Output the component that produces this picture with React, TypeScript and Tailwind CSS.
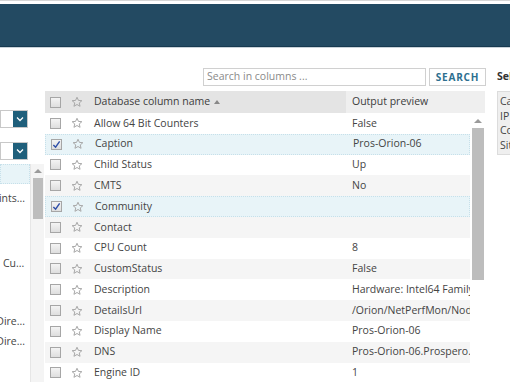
import React from 'react';

const rows: { name: string; value: string; checked?: boolean }[] = [
  { name: 'Allow 64 Bit Counters', value: 'False' },
  { name: 'Caption', value: 'Pros-Orion-06', checked: true },
  { name: 'Child Status', value: 'Up' },
  { name: 'CMTS', value: 'No' },
  { name: 'Community', value: '', checked: true },
  { name: 'Contact', value: '' },
  { name: 'CPU Count', value: '8' },
  { name: 'CustomStatus', value: 'False' },
  { name: 'Description', value: 'Hardware: Intel64 Family 6 Model 45' },
  { name: 'DetailsUrl', value: '/Orion/NetPerfMon/NodeDetails.aspx' },
  { name: 'Display Name', value: 'Pros-Orion-06' },
  { name: 'DNS', value: 'Pros-Orion-06.Prospero.local' },
  { name: 'Engine ID', value: '1' },
];

const Star = () => (
  <svg width="12" height="12" viewBox="0 0 24 24" fill="none" stroke="#a8a8a8" strokeWidth="2" strokeLinejoin="round">
    <polygon points="12,2.5 14.9,8.8 21.7,9.4 16.5,13.9 18.1,20.6 12,17 5.9,20.6 7.5,13.9 2.3,9.4 9.1,8.8" />
  </svg>
);

const Check = ({ checked }: { checked?: boolean }) => (
  <div className="w-[11px] h-[11px] border border-[#a6a6a6] bg-gradient-to-b from-[#f4f4f4] to-[#dedede] flex items-center justify-center">
    {checked && (
      <svg width="9" height="9" viewBox="0 0 10 10" fill="none" stroke="#2f4fa8" strokeWidth="1.6">
        <path d="M1.5 5.5 L4 8 L8.5 1.5" />
      </svg>
    )}
  </div>
);

const Select = () => (
  <div className="flex h-[18px] w-[28px] border border-[#c8c8c8] bg-white">
    <div className="flex-1" />
    <div className="w-[14px] bg-[#1f5f7b] flex items-center justify-center">
      <svg width="8" height="6" viewBox="0 0 8 6" fill="none" stroke="white" strokeWidth="1.3">
        <path d="M1 1.5 L4 4.5 L7 1.5" />
      </svg>
    </div>
  </div>
);

export default function App() {
  return (
    <div className="w-[510px] h-[382px] overflow-hidden bg-white text-[#444] text-[10.5px]" style={{ fontFamily: '"Open Sans", "Liberation Sans", sans-serif' }}>
      {/* Top chrome */}
      <div className="h-[1px] bg-[#d6d6d6]" />
      <div className="h-[3px] bg-white" />
      <div className="h-[43px] bg-[#234a62] border-b border-[#173a50]" />
      <div className="h-[1px] bg-[#c9d2d9]" />

      <div className="flex">
        {/* Left panel */}
        <div className="w-[45px] shrink-0 flex flex-col pt-[62px]">
          <Select />
          <div className="h-[14px]" />
          <Select />
          <div className="flex mt-[4px] h-[220px]">
            <div className="w-[31px] border-r border-[#e6e6e6] flex flex-col">
              <div className="h-[20px] bg-[#e8f4f8] border border-dotted border-[#c6e0ea]" />
              <div className="h-[24px] mt-[3px] flex items-center justify-end pr-[5px] overflow-hidden whitespace-nowrap">ints...</div>
              <div className="h-[41px]" />
              <div className="h-[24px] flex items-center pl-[3px] whitespace-nowrap">Cu...</div>
              <div className="h-[36px]" />
              <div className="h-[20px] flex items-center justify-end pr-[5px] whitespace-nowrap">Dire...</div>
              <div className="h-[20px] flex items-center justify-end pr-[5px] whitespace-nowrap">Dire...</div>
            </div>
            <div className="w-[13px] bg-[#f4f4f4] flex flex-col items-center pt-[5px]">
              <div className="w-0 h-0 border-l-[4px] border-r-[4px] border-b-[4px] border-l-transparent border-r-transparent border-b-[#9a9a9a]" />
              <div className="mt-[5px] w-[10px] h-[41px] bg-[#bdbdbd]" />
            </div>
          </div>
        </div>

        {/* Middle: search + table */}
        <div className="w-[441px] shrink-0 flex flex-col">
          <div className="flex justify-end items-center gap-[3px] mt-[20px] h-[18px]">
            <div className="w-[223px] h-[18px] border border-[#d0d0d0] flex items-center px-[3px] text-[#8a8a8a]">Search in columns ...</div>
            <div className="w-[57px] h-[18px] border border-[#d0d0d0] flex items-center justify-center text-[#2d6f8f] font-bold text-[10px] tracking-[0.08em]">SEARCH</div>
          </div>
          <div className="mt-[5px] w-[440px] border-b border-[#cfcfcf]">
            {/* Header */}
            <div className="flex h-[22px] items-center">
              <div className="w-[301px] h-full bg-[#e4e4e4] flex items-center">
                <div className="w-[21px] flex justify-center"><Check /></div>
                <div className="w-[22px] flex justify-center"><Star /></div>
                <div className="pl-[6px] text-[#3c3c3c] flex items-center gap-[4px]">
                  Database column name
                  <span className="w-0 h-0 border-l-[3.5px] border-r-[3.5px] border-b-[4px] border-l-transparent border-r-transparent border-b-[#888]" />
                </div>
              </div>
              <div className="flex-1 h-full bg-[#efefef] flex items-center pl-[6px] text-[#3c3c3c]">Output preview</div>
            </div>
            {/* Body */}
            <div className="flex">
              <div className="w-[425px]">
                {rows.map((r, i) => (
                  <div
                    key={r.name}
                    className={`flex items-center h-[20.8px] ${
                      r.checked
                        ? 'bg-[#e8f4f8] border border-dotted border-[#c6e0ea]'
                        : i % 2 === 1
                        ? 'bg-[#f5f5f5]'
                        : 'bg-white'
                    }`}
                  >
                    <div className="w-[21px] flex justify-center"><Check checked={r.checked} /></div>
                    <div className="w-[22px] flex justify-center"><Star /></div>
                    <div className="w-[258px] pl-[6px] whitespace-nowrap overflow-hidden">{r.name}</div>
                    <div className="flex-1 pl-[6px] whitespace-nowrap overflow-hidden">{r.value}</div>
                  </div>
                ))}
              </div>
              <div className="w-[15px] bg-white flex flex-col items-center pt-[6px]">
                <div className="w-0 h-0 border-l-[4px] border-r-[4px] border-b-[4px] border-l-transparent border-r-transparent border-b-[#9a9a9a]" />
                <div className="mt-[5px] w-[12px] h-[152px] bg-[#bdbdbd]" />
              </div>
            </div>
          </div>
        </div>

        {/* Right panel */}
        <div className="ml-[11px] flex-1 flex flex-col">
          <div className="mt-[21px] h-[16px] font-bold text-[#333] whitespace-nowrap">Selected</div>
          <div className="mt-[6px] h-[64px] bg-[#efefef] border border-[#dcdcdc] pl-[2px] pt-[2px] leading-[14.5px] whitespace-nowrap overflow-hidden">
            <div>Caption</div>
            <div>IP Address</div>
            <div>Community</div>
            <div>Site</div>
          </div>
        </div>
      </div>
    </div>
  );
}
